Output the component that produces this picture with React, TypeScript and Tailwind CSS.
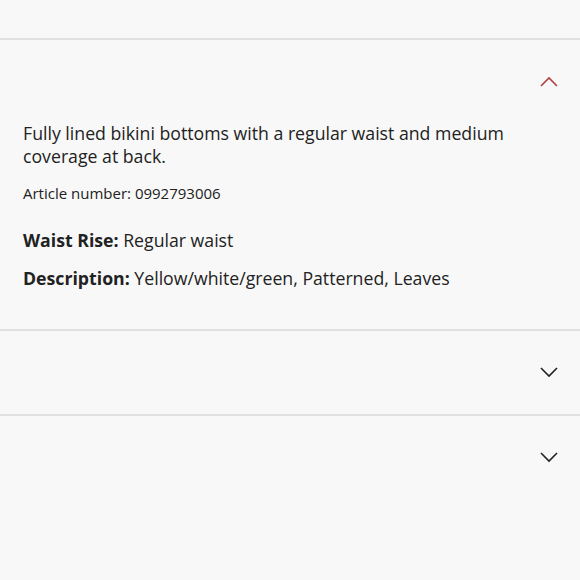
import React from 'react';

function Chevron({ up, className }: { up?: boolean; className?: string }) {
  return (
    <svg width="18" height="11" viewBox="0 0 18 11" fill="none" className={className}>
      <path
        d={up ? 'M1 10 L9 2 L17 10' : 'M1 1 L9 9 L17 1'}
        stroke="currentColor"
        strokeWidth="1.6"
      />
    </svg>
  );
}

export default function App() {
  return (
    <div
      className="w-[580px] h-[580px] bg-[#f8f8f8] text-[#222] overflow-hidden"
      style={{ fontFamily: '"Open Sans", Lato, sans-serif' }}
    >
      <div className="h-[38px]" />
      <div className="border-t-2 border-[#e0e0e0]">
        <div className="flex justify-end items-center h-[82px] pr-[22px]">
          <Chevron up className="text-[#b0403f]" />
        </div>
        <div className="px-[23px] pb-[39px]">
          <p className="text-[17.7px] leading-[23px]">
            Fully lined bikini bottoms with a regular waist and medium coverage at back.
          </p>
          <p className="mt-[15px] text-[15px] leading-[20px]">Article number: 0992793006</p>
          <p className="mt-[26px] text-[17.7px] leading-[23px]">
            <span className="font-bold">Waist Rise:</span> Regular waist
          </p>
          <p className="mt-[15px] text-[17.7px] leading-[23px]">
            <span className="font-bold">Description:</span> Yellow/white/green, Patterned, Leaves
          </p>
        </div>
      </div>
      <div className="border-t-2 border-[#e0e0e0]">
        <div className="flex justify-end items-center h-[83px] pr-[22px]">
          <Chevron />
        </div>
      </div>
      <div className="border-t-2 border-[#e0e0e0]">
        <div className="flex justify-end items-center h-[83px] pr-[22px]">
          <Chevron />
        </div>
      </div>
    </div>
  );
}
